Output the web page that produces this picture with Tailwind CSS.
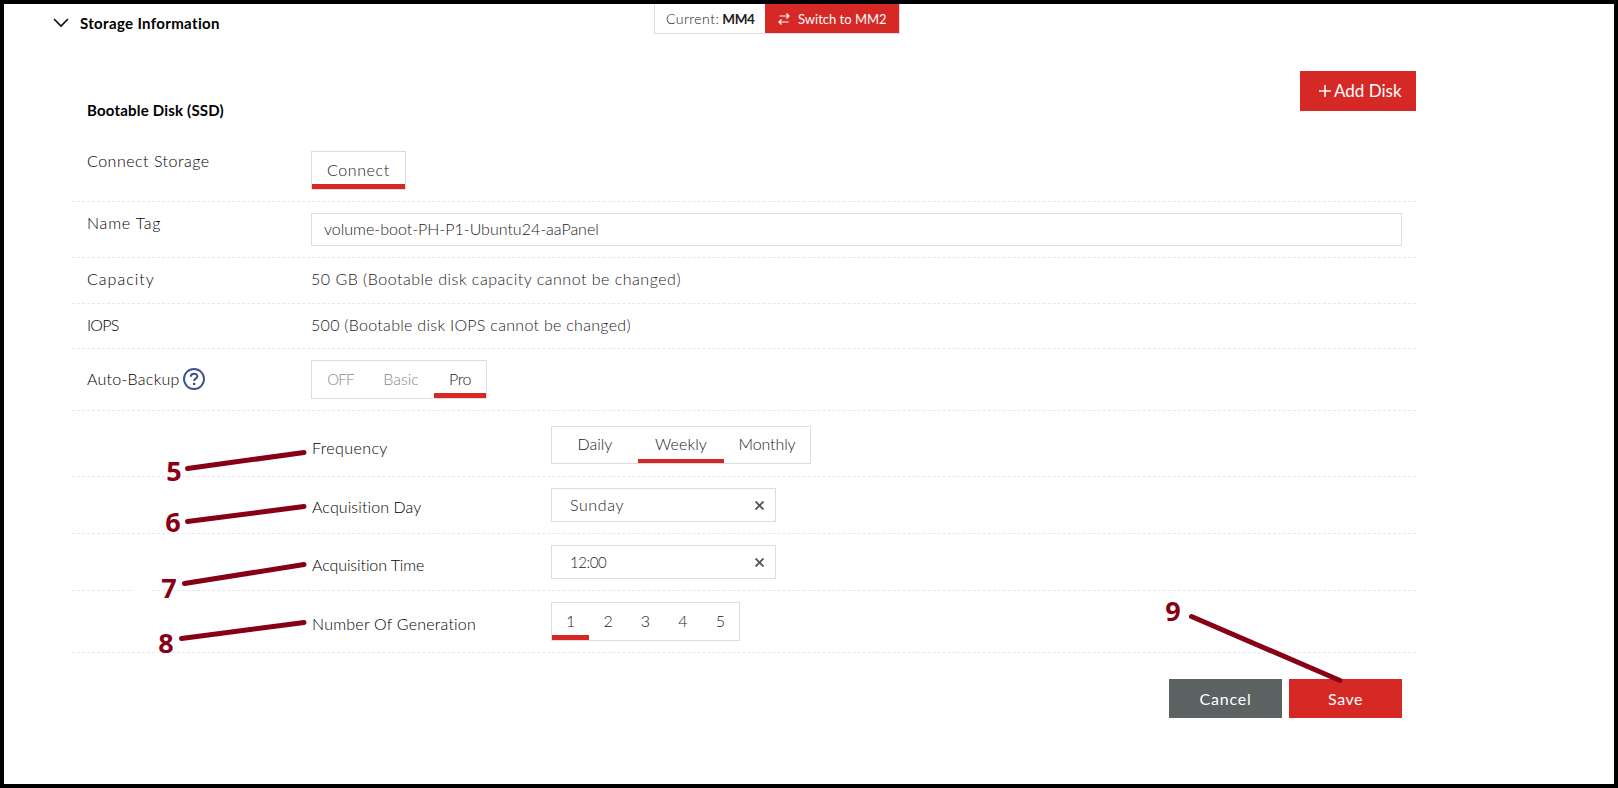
<!DOCTYPE html>
<html lang="en">
<head>
    <meta charset="UTF-8">
    <meta name="viewport" content="width=device-width, initial-scale=1.0">
    <title>Storage Information</title>
    <script src="https://cdn.jsdelivr.net/npm/@tailwindcss/browser@4"></script>
</head>
<body class="w-[1618px] h-[788px] overflow-hidden font-['Lato','Open_Sans',sans-serif] text-[16px] leading-5 font-light text-black">
    <div class="relative w-full h-full border-4 border-black bg-white">

        <!-- Interface switcher -->
        <div class="absolute left-[650px] top-0 w-[246px] h-[30px] flex border border-t-0 border-[#ddd]">
            <div class="w-[110px] pl-[11px] pt-[5px] text-[14px] whitespace-nowrap text-[#222]"><span class="tracking-[0.45px]">Current:</span><b class="ml-[3px] font-bold text-[13.5px] tracking-[-0.3px]">MM4</b></div>
            <div class="flex-1 flex items-center pl-[13px] bg-[#d62926] text-white text-[13px] font-normal">
                <svg class="w-3 h-3 mr-2" fill="none" stroke="currentColor" stroke-width="1.2" viewBox="0 0 12 12"><path d="M1.500 3h9.500M8.500 .5L11 3 8.500 5.500M10.500 9H1M3.500 6.500L1 9l2.500 2.500"></path></svg>
                <span>Switch to MM2</span>
            </div>
        </div>

        <!-- Section header -->
        <div class="flex items-center pl-[49px] pt-[9px]">
            <svg class="w-4 h-[10px] mr-[11px]" fill="none" stroke="#111" stroke-width="1.7" viewBox="0 0 16 10"><path d="M1 1l7 7 7-7"></path></svg>
            <h2 class="font-bold text-[15px] tracking-[0.35px]">Storage Information</h2>
        </div>

        <div class="ml-[68px] w-[1344px]">
            <div class="flex justify-between items-start h-[107px] pt-[38px] pl-[15px]">
                <h3 class="pt-[29px] font-bold text-[15px] tracking-[0.2px]">Bootable Disk (SSD)</h3>
                <button class="flex items-center w-[116px] h-10 pl-[19px] bg-[#d62926] text-white text-[17px] font-normal">
                    <svg class="w-3 h-3 mr-[3px]" stroke="currentColor" stroke-width="1.5" viewBox="0 0 12 12"><path d="M6 0v12M0 6h12"></path></svg>
                    Add Disk
                </button>
            </div>

            <div class="flex items-start h-[62px] border-b border-dashed border-[#e8e8e8] pl-[15px] pt-[11px]">
                <div class="w-[224px] tracking-[0.5px]">Connect Storage</div>
                <div class="w-[95px] h-[39px] border border-[#ddd]">
                    <div class="h-full border-b-[5px] border-[#d62926] pt-2 pl-[15px] text-[#222] tracking-[0.6px]">Connect</div>
                </div>
            </div>
            <div class="flex items-start h-14 border-b border-dashed border-[#e8e8e8] pl-[15px] pt-[11px]">
                <div class="w-[224px] tracking-[0.8px]">Name Tag</div>
                <div class="w-[1091px] h-[33px] border border-[#ddd] pl-3 pt-[5px] text-[#222] tracking-[-0.01px]">volume-boot-PH-P1-Ubuntu24-aaPanel</div>
            </div>
            <div class="flex items-start h-[46px] border-b border-dashed border-[#e8e8e8] pl-[15px] pt-[11px]">
                <div class="w-[224px] tracking-[1px]">Capacity</div>
                <div class="text-[#222] tracking-[0.5px]">50 GB (Bootable disk capacity cannot be changed)</div>
            </div>
            <div class="flex items-start h-[45px] border-b border-dashed border-[#e8e8e8] pl-[15px] pt-[11px]">
                <div class="w-[224px] tracking-[-0.8px]">IOPS</div>
                <div class="text-[#222] tracking-[0.29px]">500 (Bootable disk IOPS cannot be changed)</div>
            </div>
            <div class="flex items-start h-[62px] border-b border-dashed border-[#e8e8e8] pl-[15px] pt-[11px]">
                <div class="w-[224px] flex items-center pt-2">
                    <span class="w-24 tracking-[0.25px]">Auto-Backup</span>
                    <svg class="w-[22px] h-[22px]" fill="none" stroke="#3c4f90" viewBox="0 0 22 22"><circle cx="11" cy="11" r="10" stroke-width="1.9"></circle><path stroke-width="2" d="M7.800 8.800c0-4.200 6.500-4 6.500-.5 0 2.400-3.200 2.300-3.200 4.700"></path><path stroke-width="2.200" d="M11.100 14.800v2.200"></path></svg>
                </div>
                <div class="flex w-44 h-[39px] border border-[#ddd] text-center text-[#888]">
                    <div class="w-[57px] pt-2 text-[15px] tracking-[-0.7px]">OFF</div>
                    <div class="w-16 pt-2">Basic</div>
                    <div class="w-[53px] pl-px">
                        <div class="h-full pt-2 border-b-[5px] border-[#d62926] text-[#222] tracking-[-0.4px]">Pro</div>
                    </div>
                </div>
            </div>

            <!-- Backup schedule -->
            <div class="flex items-start h-[66px] border-b border-dashed border-[#e8e8e8] pl-60 pt-[15px]">
                <div class="w-[239px] pt-3 tracking-[0.4px]">Frequency</div>
                <div class="grid grid-cols-3 w-[260px] h-[38px] border border-[#ddd] text-center text-[#222]">
                    <div class="pt-[7px]">Daily</div>
                    <div class="pt-[7px] border-b-4 border-[#d62926] tracking-[0.1px]">Weekly</div>
                    <div class="pt-[7px] tracking-[-0.1px]">Monthly</div>
                </div>
            </div>
            <div class="flex items-start h-[57px] border-b border-dashed border-[#e8e8e8] pl-60 pt-[11px]">
                <div class="w-[239px] pt-[9px] tracking-[0.1px]">Acquisition Day</div>
                <div class="flex items-center justify-between w-[225px] h-[34px] border border-[#ddd] pl-[18px] pr-[11px]">
                    <span class="-mt-px text-[#222] tracking-[0.6px]">Sunday</span>
                    <svg class="w-[9px] h-[9px]" stroke="#555" stroke-width="1.9" viewBox="0 0 9 9"><path d="M.5.5l8 8M8.500.5l-8 8"></path></svg>
                </div>
            </div>
            <div class="flex items-start h-[57px] border-b border-dashed border-[#e8e8e8] pl-60 pt-[11px]">
                <div class="w-[239px] pt-2.5 tracking-[-0.1px]">Acquisition Time</div>
                <div class="flex items-center justify-between w-[225px] h-[34px] border border-[#ddd] pl-[18px] pr-[11px]">
                    <span class="-mt-px text-[15px] text-[#222] tracking-[-0.4px]">12:00</span>
                    <svg class="w-[9px] h-[9px]" stroke="#555" stroke-width="1.9" viewBox="0 0 9 9"><path d="M.5.5l8 8M8.500.5l-8 8"></path></svg>
                </div>
            </div>
            <div class="flex items-start h-[62px] border-b border-dashed border-[#e8e8e8] pl-60 pt-[11px]">
                <div class="w-[239px] pt-3 tracking-[0.22px]">Number Of Generation</div>
                <div class="grid grid-cols-5 w-[189px] h-[39px] border border-[#ddd] text-center text-[#222]">
                    <div class="pt-2 border-b-[5px] border-[#d62926]">1</div>
                    <div class="pt-2">2</div>
                    <div class="pt-2">3</div>
                    <div class="pt-2">4</div>
                    <div class="pt-2">5</div>
                </div>
            </div>

            <div class="flex justify-end gap-[7px] mt-[26px] pr-3.5 text-white font-normal">
                <button class="w-[113px] h-[39px] bg-[#5a6262] tracking-[0.8px]">Cancel</button>
                <button class="w-[113px] h-[39px] bg-[#d62926] tracking-[0.5px]">Save</button>
            </div>
        </div>
    </div>

    <!-- Step callouts -->
    <svg class="absolute left-0 top-0 w-[1618px] h-[788px] pointer-events-none" viewBox="0 0 1618 788">
        <rect x="133" y="588" width="19" height="5" fill="#fff"></rect>
        <g stroke="#880015" stroke-width="5" stroke-linecap="round">
            <path d="M187.500 468.500L304 452.500"></path>
            <path d="M187.500 521.500L304 506.500"></path>
            <path d="M184.500 583.500L304 564.500"></path>
            <path d="M181.500 638.500L304 622.500"></path>
            <path d="M1191.500 616.500L1340 680.500"></path>
        </g>
        <g class="font-['Open_Sans',sans-serif] font-bold text-[27px]" fill="#880015" text-anchor="middle">
            <text x="174" y="481">5</text>
            <text x="173" y="532">6</text>
            <text x="169" y="598">7</text>
            <text x="166" y="653">8</text>
            <text x="1173" y="621">9</text>
        </g>
    </svg>
</body>
</html>
